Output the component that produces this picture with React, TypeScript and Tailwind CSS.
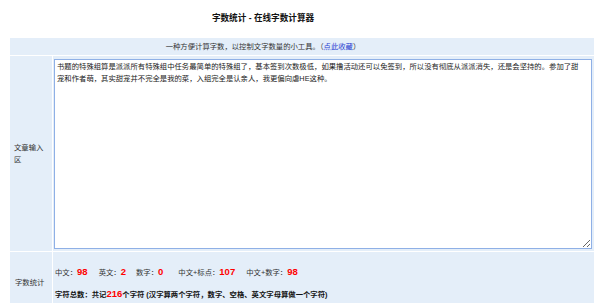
const body =
  "书题的特殊组算是派派所有特殊组中任务最简单的特殊组了，基本签到次数极低，如果撸活动还可以免签到，所以没有彻底从派派消失，还是会坚持的。参加了甜宠和作者萌，其实甜宠并不完全是我的菜，入组完全是认亲人，我更偏向虐HE这种。";

function Num({ v }: { v: string }) {
  return <b className="text-[9.5px] font-bold text-[#ff0000]">{v}</b>;
}

export default function App() {
  return (
    <div className="w-[600px] h-[303px] overflow-hidden bg-white text-[#333] font-[family-name:'Liberation_Sans','Noto_Sans_CJK_SC',sans-serif]">
      <h1 className="h-[38px] pb-[2px] flex items-center justify-center pr-[74px] text-[8.6px] font-bold text-[#111]">
        字数统计 - 在线字数计算器
      </h1>
      <div className="ml-[10px] w-[584px] grid grid-cols-[42px_1fr] gap-px bg-white text-[7.35px] leading-[12px]">
        <div className="col-span-2 h-[17px] bg-[#e4eef9] flex items-center justify-center pr-[78px]">
          一种方便计算字数，以控制文字数量的小工具。（<span className="text-[#2a3fd1]">点此收藏</span>）
        </div>

        <div className="bg-[#e4eef9] flex items-center px-[4px]">文章输入区</div>
        <div className="bg-[#e4eef9] pl-px pr-[2px] pt-[3px] pb-[2px]">
          <textarea
            readOnly
            value={body}
            className="block w-full h-[190px] bg-white border border-[#8fb0e6] pl-[2px] pr-[8px] pt-px text-[7.35px] leading-[12px] text-[#222] outline-none"
          />
        </div>

        <div className="bg-[#e4eef9] flex items-center px-[5px] h-[62px]">字数统计</div>
        <div className="bg-[#e4eef9] pl-[2px] pt-[14px] flex flex-col gap-[9px]">
          <div className="flex items-baseline">
            <span>中文：</span>
            <Num v="98" />
            <span className="ml-[11px]">英文：</span>
            <Num v="2" />
            <span className="ml-[10px]">数字：</span>
            <Num v="0" />
            <span className="ml-[15px]">中文+标点：</span>
            <Num v="107" />
            <span className="ml-[11px]">中文+数字：</span>
            <Num v="98" />
          </div>
          <div className="flex items-baseline font-bold text-[#111]">
            <span>字符总数：共记</span>
            <Num v="216" />
            <span>个字符 (汉字算两个字符，数字、空格、英文字母算做一个字符)</span>
          </div>
        </div>
      </div>
    </div>
  );
}
